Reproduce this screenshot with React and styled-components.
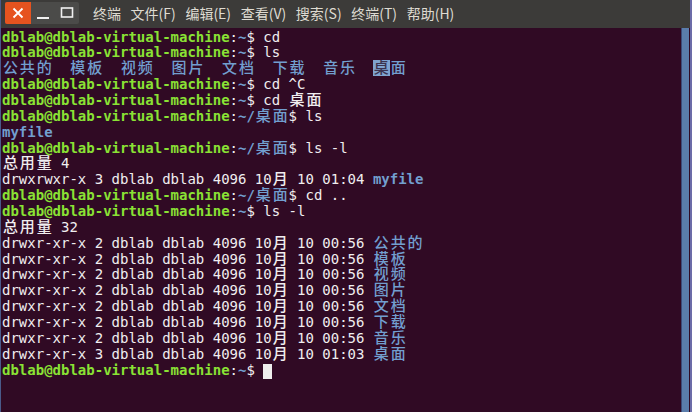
import React from 'react';
import styled, { createGlobalStyle } from 'styled-components';

const CELL = 8.43;
const ROW = 15.86;

const GlobalStyle = createGlobalStyle`
  html, body {
    margin: 0;
    padding: 0;
    background: #300a24;
  }
`;

const Window = styled.div`
  width: 692px;
  height: 412px;
  display: flex;
  flex-direction: column;
  background: #300a24;
  box-sizing: border-box;
  border-left: 1px solid #4a5a8a;
  border-right: 2px solid #6c6ca8;
  overflow: hidden;
`;

const TitleBar = styled.div`
  height: 28px;
  flex: none;
  display: flex;
  align-items: center;
  padding-left: 4px;
  background: #3c3b39;
`;

const Controls = styled.div`
  display: flex;
  height: 22px;
  background: #4b4b49;
  border-radius: 2px;
  margin-top: -2px;
`;

const CloseButton = styled.div`
  width: 26px;
  height: 22px;
  background: #e6531f;
  border-radius: 2px 0 0 2px;
  display: flex;
  align-items: center;
  justify-content: center;
`;

const ControlButton = styled.div`
  width: 24px;
  height: 22px;
  display: flex;
  align-items: center;
  justify-content: center;
`;

const Menu = styled.nav`
  display: flex;
  gap: 9.6px;
  margin-left: 14px;
  margin-top: -2px;
  font-family: "Noto Sans CJK SC", "Noto Sans", sans-serif;
  font-size: 14px;
  color: #dfdbd2;
`;

const MenuItem = styled.span`
  white-space: nowrap;
`;

const Body = styled.div`
  flex: 1;
  display: flex;
  min-height: 0;
`;

const Screen = styled.div`
  flex: 1;
  padding: 1.5px 0 0 1px;
  font-family: "DejaVu Sans Mono", "Noto Sans CJK SC", monospace;
  font-size: 14px;
  color: #f0eef0;
  white-space: pre;
`;

const Line = styled.div`
  height: ${ROW}px;
  line-height: ${ROW}px;
`;

const tones = {
  plain: { color: '#f0eef0', weight: 400 },
  user: { color: '#8ae234', weight: 700 },
  path: { color: '#729fcf', weight: 700 },
  dir: { color: '#729fcf', weight: 700 },
};

const Seg = styled.span`
  color: ${({ $tone }) => tones[$tone].color};
  font-weight: ${({ $tone }) => tones[$tone].weight};
`;

const Selected = styled.span`
  background: #7fa3cf;
  color: #3b3350;
  font-weight: 700;
`;

const Wide = styled.span`
  display: inline-block;
  width: ${CELL * 2}px;
  height: ${ROW}px;
  text-align: center;
  font-size: 15px;
  font-weight: 500;
  vertical-align: top;
`;

const Cursor = styled.span`
  display: inline-block;
  width: ${CELL}px;
  height: 15px;
  vertical-align: top;
  margin-top: 1px;
  background: #eeeeec;
`;

const Scrollbar = styled.div`
  width: 7px;
  flex: none;
  margin-right: 1px;
  background: #5a7dab;
  border-left: 1px solid #3c4a78;
`;

const isWide = (ch) => /[\u2e80-\u9fff\uff00-\uffef]/.test(ch);

function cells(text) {
  const out = [];
  let run = '';
  [...text].forEach((ch, i) => {
    if (isWide(ch)) {
      if (run) out.push(run);
      run = '';
      out.push(<Wide key={i}>{ch}</Wide>);
    } else {
      run += ch;
    }
  });
  if (run) out.push(run);
  return out;
}

const prompt = (path, cmd) => [
  ['user', 'dblab@dblab-virtual-machine'],
  ['plain', ':'],
  ['path', path],
  ['plain', '$ ' + cmd],
];

const listing = (links, time, name) => [
  ['plain', `drwxr-xr-x ${links} dblab dblab 4096 10月 10 ${time} `],
  ['dir', name],
];

const lines = [
  prompt('~', 'cd'),
  prompt('~', 'ls'),
  [
    ['dir', '公共的'], ['plain', '  '], ['dir', '模板'], ['plain', '  '],
    ['dir', '视频'], ['plain', '  '], ['dir', '图片'], ['plain', '  '],
    ['dir', '文档'], ['plain', '  '], ['dir', '下载'], ['plain', '  '],
    ['dir', '音乐'], ['plain', '  '], ['sel', '桌'], ['dir', '面'],
  ],
  prompt('~', 'cd ^C'),
  prompt('~', 'cd 桌面'),
  prompt('~/桌面', 'ls'),
  [['dir', 'myfile']],
  prompt('~/桌面', 'ls -l'),
  [['plain', '总用量 4']],
  [['plain', 'drwxrwxr-x 3 dblab dblab 4096 10月 10 01:04 '], ['dir', 'myfile']],
  prompt('~/桌面', 'cd ..'),
  prompt('~', 'ls -l'),
  [['plain', '总用量 32']],
  listing(2, '00:56', '公共的'),
  listing(2, '00:56', '模板'),
  listing(2, '00:56', '视频'),
  listing(2, '00:56', '图片'),
  listing(2, '00:56', '文档'),
  listing(2, '00:56', '下载'),
  listing(2, '00:56', '音乐'),
  listing(3, '01:03', '桌面'),
];

const menu = ['终端', '文件(F)', '编辑(E)', '查看(V)', '搜索(S)', '终端(T)', '帮助(H)'];

export default function App() {
  return (
    <>
      <GlobalStyle />
      <Window>
        <TitleBar>
          <Controls>
            <CloseButton>
              <svg width="12" height="12" viewBox="0 0 12 12">
                <path d="M1.5 1.5 L10.5 10.5 M10.5 1.5 L1.5 10.5" stroke="#fff" strokeWidth="1.8" />
              </svg>
            </CloseButton>
            <ControlButton>
              <svg width="14" height="14" viewBox="0 0 14 14">
                <rect x="1" y="11" width="12" height="2" fill="#f0f0f0" />
              </svg>
            </ControlButton>
            <ControlButton>
              <svg width="14" height="14" viewBox="0 0 14 14">
                <rect x="1.5" y="2" width="11" height="9" fill="none" stroke="#f0f0f0" strokeWidth="1.6" />
              </svg>
            </ControlButton>
          </Controls>
          <Menu>
            {menu.map((m, i) => (
              <MenuItem key={i}>{m}</MenuItem>
            ))}
          </Menu>
        </TitleBar>
        <Body>
          <Screen>
            {lines.map((segs, i) => (
              <Line key={i}>
                {segs.map(([tone, text], j) =>
                  tone === 'sel' ? (
                    <Selected key={j}>{cells(text)}</Selected>
                  ) : (
                    <Seg key={j} $tone={tone}>{cells(text)}</Seg>
                  )
                )}
              </Line>
            ))}
            <Line>
              {prompt('~', '').map(([tone, text], j) => (
                <Seg key={j} $tone={tone}>{cells(text)}</Seg>
              ))}
              <Cursor />
            </Line>
          </Screen>
          <Scrollbar />
        </Body>
      </Window>
    </>
  );
}
